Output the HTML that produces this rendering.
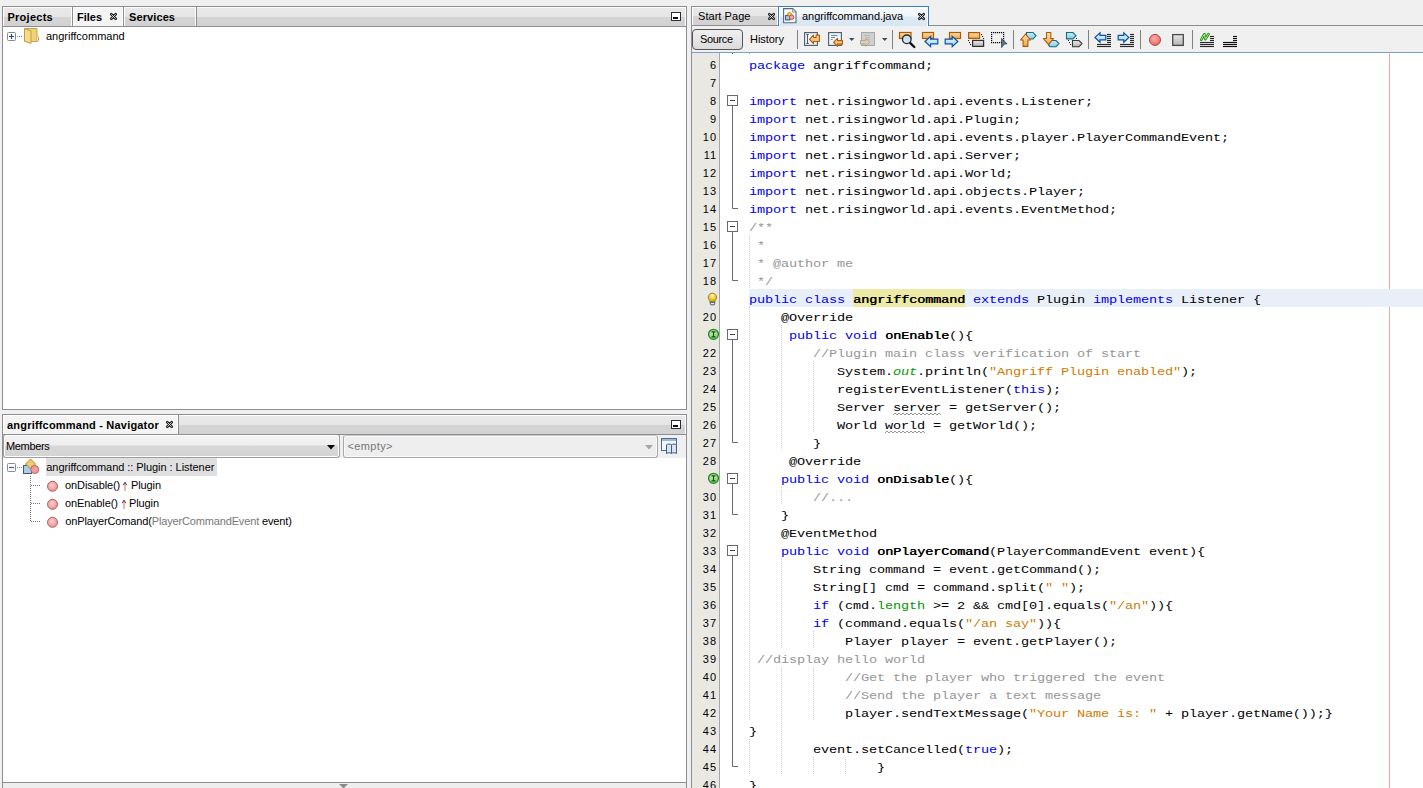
<!DOCTYPE html>
<html><head><meta charset="utf-8">
<style>
*{box-sizing:border-box;margin:0;padding:0}
html,body{width:1423px;height:788px;overflow:hidden;background:#f0f0f0;font-family:"Liberation Sans",sans-serif;font-size:11px;color:#000}
.a{position:absolute}
.bd{border:1px solid #8c8e93}
.tabg{background:linear-gradient(#e9e9e9 0,#e6e6e6 50%,#d4d4d4 52%,#d2d2d2 100%)}
.tt{position:absolute;font-weight:bold;font-size:11px;line-height:13px;white-space:pre}
.code{position:absolute;left:749px;font-family:"Liberation Mono",monospace;font-size:11.8px;letter-spacing:-0.1245px;line-height:18px;white-space:pre;color:#000;transform:scaleX(1.15);transform-origin:0 0}
.ln{position:absolute;left:692px;width:25.1px;text-align:right;font-size:11px;line-height:18px;letter-spacing:1px;color:#000}
.k{color:#0000e6}
.c{color:#969696}
.s{color:#ce7b00}
.f{color:#009900}
.b{font-weight:normal;text-shadow:0.5px 0 0 #000}
.w{}
</style></head><body>
<!-- ============ Projects panel ============ -->
<div class="a bd" style="left:2px;top:6px;width:685px;height:404px;background:#fff"></div>
<div class="a tabg" style="left:3px;top:7px;width:683px;height:20px;border-bottom:1px solid #8c8e93;box-shadow:inset 1px 1px 0 #fff,inset -1px 0 0 #fff"></div>
<div class="a tabg" style="left:3px;top:7px;width:70px;height:20px;border-bottom:1px solid #8c8e93;border-right:1px solid #8c8e93;box-shadow:inset 1px 1px 0 #fff,inset -1px 0 0 #fff"></div>
<div class="a" style="left:73px;top:7px;width:51px;height:20px;background:#f4f4f4;border-bottom:1px solid #8c8e93;border-right:1px solid #8c8e93;box-shadow:inset 1px 1px 0 #fff,inset -1px 0 0 #fff"></div>
<div class="a tabg" style="left:124px;top:7px;width:73px;height:20px;border-bottom:1px solid #8c8e93;border-right:1px solid #8c8e93;box-shadow:inset 1px 1px 0 #fff,inset -1px 0 0 #fff"></div>
<div class="tt" style="left:7.5px;top:11px;letter-spacing:0.25px">Projects</div>
<div class="tt" style="left:77px;top:11px">Files</div>
<div class="tt" style="left:129px;top:11px;letter-spacing:0.1px">Services</div>
<svg class="a" width="9" height="9" viewBox="0 0 9 9" style="left:109px;top:12px"><path d="M2.3 2.3L6.7 6.7M6.7 2.3L2.3 6.7" stroke="#262626" stroke-width="2.7" stroke-linecap="round"/><path d="M2.3 2.3L6.7 6.7M6.7 2.3L2.3 6.7" stroke="#f2f2f2" stroke-width="0.8"/></svg>
<div class="a" style="left:671px;top:12px;width:10px;height:9px;border:1px solid #2e2e33;background:#fff"></div><div class="a" style="left:673px;top:17px;width:5px;height:2px;background:#111"></div>
<svg class="a" width="40" height="18" style="left:4px;top:27px" viewBox="0 0 40 18">
 <rect x="3.5" y="5.5" width="8" height="8" rx="1" fill="#fbfbfb" stroke="#8a8a8a"/>
 <path d="M5 9.5h5M7.5 7v5" stroke="#24468c" stroke-width="1.2"/>
 <path d="M13 9.5h1M15 9.5h1M17 9.5h1" stroke="#808080"/>
 <path d="M20.5 1.5h12.5v13h-12.5z" fill="#efd27c" stroke="#c8a24c"/>
 <path d="M20.5 1.5l6.5 2.5v12.5l-6.5-2.5z" fill="#f3dc8c" stroke="#c39a40"/>
 <path d="M33 8.5l1.5 1.5v3.5l-1.5 1" fill="#f5f0e0" stroke="#c8a24c"/>
</svg>
<div class="a" style="left:46px;top:30px;line-height:13px">angriffcommand</div>

<!-- ============ Navigator panel ============ -->
<div class="a bd" style="left:2px;top:414px;width:685px;height:380px;background:#fff"></div>
<div class="a tabg" style="left:3px;top:415px;width:683px;height:20px;border-bottom:1px solid #8c8e93;box-shadow:inset 1px 1px 0 #fff,inset -1px 0 0 #fff"></div>
<div class="a" style="left:3px;top:415px;width:176px;height:20px;background:#f4f4f4;border-bottom:1px solid #8c8e93;border-right:1px solid #8c8e93;box-shadow:inset 1px 1px 0 #fff,inset -1px 0 0 #fff"></div>
<div class="tt" style="left:7px;top:419px;letter-spacing:0.2px">angriffcommand - Navigator</div>
<svg class="a" width="9" height="9" viewBox="0 0 9 9" style="left:165px;top:420px"><path d="M2.3 2.3L6.7 6.7M6.7 2.3L2.3 6.7" stroke="#262626" stroke-width="2.7" stroke-linecap="round"/><path d="M2.3 2.3L6.7 6.7M6.7 2.3L2.3 6.7" stroke="#f2f2f2" stroke-width="0.8"/></svg>
<div class="a" style="left:671px;top:420px;width:10px;height:9px;border:1px solid #2e2e33;background:#fff"></div><div class="a" style="left:673px;top:425px;width:5px;height:2px;background:#111"></div>
<div class="a" style="left:3px;top:435px;width:683px;height:23px;background:#f0f0f0"></div>
<div class="a" style="left:3px;top:434px;width:337px;height:24px;border:1px solid #9c9c9c;border-top-color:#8c8e93;border-radius:3px;box-shadow:inset 0 0 0 1px #fff;background:linear-gradient(#f3f3f3 0,#eeeeee 45%,#d8d8d8 50%,#d3d3d3 100%)"></div>
<div class="a" style="left:6px;top:440px;line-height:13px;letter-spacing:-0.35px">Members</div>
<svg class="a" width="8" height="5" style="left:327px;top:445px"><path d="M0 0h8l-4 4.5z" fill="#000"/></svg>
<div class="a" style="left:343px;top:435px;width:315px;height:23px;border:1px solid #a8a8a8;border-top-color:#c8c8c8;border-radius:3px;box-shadow:inset 0 0 0 1px #fafafa;background:#eeeeee"></div>
<div class="a" style="left:347.5px;top:440px;line-height:13px;color:#777;letter-spacing:0.35px">&lt;empty&gt;</div>
<svg class="a" width="8" height="5" style="left:645px;top:445px"><path d="M0 0h8l-4 4.5z" fill="#a8a8a8"/></svg>
<svg class="a" width="18" height="18" style="left:660px;top:437px" viewBox="0 0 18 18">
 <rect x="1.5" y="1.5" width="15" height="12" fill="#f4f7fb" stroke="#4a6a8e"/>
 <rect x="2" y="2" width="14" height="2" fill="#9bb8d8"/>
 <path d="M6.5 7.8c1.5-1 3.5-1 5 0c1.5-1 3.5-1 5 0v8.7c-1.5-1-3.5-1-5 0c-1.5-1-3.5-1-5 0z" fill="#d6e4f2" stroke="#3e5f84"/>
 <path d="M11.5 7.8v8.7" stroke="#3e5f84"/>
</svg>

<div class="a" style="left:46px;top:458px;width:171px;height:18px;background:#e0e0e0"></div>
<svg class="a" width="60" height="76" style="left:4px;top:456px" viewBox="0 0 60 76">
 <rect x="3.5" y="7.5" width="8" height="8" rx="1" fill="#fbfbfb" stroke="#8a8a8a"/>
 <path d="M5 11.5h5" stroke="#3c5cc0" stroke-width="1.2"/>
 <path d="M13 11.5h1M15 11.5h1M17 11.5h1" stroke="#808080"/>
 <rect x="19.5" y="9.5" width="8" height="8" fill="#a9cdee" stroke="#3e5870"/>
 <path d="M26.5 3l5 5l-5 5l-5-5z" fill="#eccb72" stroke="#b88a2a"/>
 <circle cx="30.7" cy="13.5" r="4" fill="#f39c9c" stroke="#b46262"/>
 <path d="M26.5 20v45M27 29.5h10M27 47.5h10M27 65.5h10" stroke="#777" stroke-dasharray="1 1"/>
 <defs><radialGradient id="rg" cx="0.45" cy="0.4" r="0.6"><stop offset="0" stop-color="#fbd0d0"/><stop offset="1" stop-color="#ee8e8e"/></radialGradient></defs><circle cx="48.5" cy="30.3" r="5" fill="url(#rg)" stroke="#b25c5c"/>
 <circle cx="48.5" cy="48.3" r="5" fill="url(#rg)" stroke="#b25c5c"/>
 <circle cx="48.5" cy="66.3" r="5" fill="url(#rg)" stroke="#b25c5c"/>
</svg>
<div class="a" style="left:46.3px;top:461px;line-height:13px;letter-spacing:-0.05px">angriffcommand :: Plugin : Listener</div>
<div class="a" style="left:65px;top:479px;line-height:13px;letter-spacing:-0.1px">onDisable()</div><svg class="a" width="6" height="11" style="left:122px;top:481px" viewBox="0 0 6 11"><path d="M3 2.5V10" stroke="#d87878" stroke-width="1.1"/><path d="M1.2 4.2L3 1.2L4.8 4.2" fill="none" stroke="#5a2a2a" stroke-width="1"/></svg><div class="a" style="left:131px;top:479px;line-height:13px;letter-spacing:-0.1px">Plugin</div>
<div class="a" style="left:65px;top:497px;line-height:13px;letter-spacing:-0.1px">onEnable()</div><svg class="a" width="6" height="11" style="left:121px;top:499px" viewBox="0 0 6 11"><path d="M3 2.5V10" stroke="#d87878" stroke-width="1.1"/><path d="M1.2 4.2L3 1.2L4.8 4.2" fill="none" stroke="#5a2a2a" stroke-width="1"/></svg><div class="a" style="left:129px;top:497px;line-height:13px;letter-spacing:-0.1px">Plugin</div>
<div class="a" style="left:65.3px;top:515px;line-height:13px;letter-spacing:-0.15px">onPlayerComand(<span style="color:#777">PlayerCommandEvent</span> event)</div>
<div class="a" style="left:3px;top:782px;width:683px;height:6px;background:#eeeeee;border-top:1px solid #8c8e93"></div>
<svg class="a" width="10" height="5" style="left:339px;top:784px"><path d="M0 0h9l-4.5 4.5z" fill="#8a8a8a"/></svg>

<!-- ============ Editor ============ -->
<div class="a" style="left:691px;top:25px;width:732px;height:763px;background:#f0f0f0;border-left:1px solid #8c8e93;border-top:1px solid #8c8e93"></div>
<div class="a tabg" style="left:691px;top:6px;width:88px;height:20px;border:1px solid #8c8e93;box-shadow:inset 1px 1px 0 #fff,inset -1px 0 0 #fff"></div>
<div class="a" style="left:778px;top:6px;width:151px;height:20px;border:1px solid #3a7bbd;border-bottom:none;background:linear-gradient(#f7fbfe 0,#eff6fb 48%,#dde9f5 52%,#d8e7f4 100%);box-shadow:inset 1px 1px 0 #fff,inset -1px 0 0 #fff"></div>
<div class="a" style="left:698px;top:10px;line-height:13px;letter-spacing:0.05px">Start Page</div>
<div class="a" style="left:802px;top:10px;line-height:13px;letter-spacing:-0.05px">angriffcommand.java</div>
<svg class="a" width="9" height="9" viewBox="0 0 9 9" style="left:767px;top:12px"><path d="M2.3 2.3L6.7 6.7M6.7 2.3L2.3 6.7" stroke="#262626" stroke-width="2.7" stroke-linecap="round"/><path d="M2.3 2.3L6.7 6.7M6.7 2.3L2.3 6.7" stroke="#f2f2f2" stroke-width="0.8"/></svg>
<svg class="a" width="9" height="9" viewBox="0 0 9 9" style="left:917px;top:12px"><path d="M2.3 2.3L6.7 6.7M6.7 2.3L2.3 6.7" stroke="#262626" stroke-width="2.7" stroke-linecap="round"/><path d="M2.3 2.3L6.7 6.7M6.7 2.3L2.3 6.7" stroke="#f2f2f2" stroke-width="0.8"/></svg>
<svg class="a" width="16" height="17" style="left:782px;top:7px" viewBox="0 0 16 17">
 <path d="M1.6 1.6h9.2l3.2 3.2v11h-12.4z" fill="#f8fafc" stroke="#5c6875" stroke-width="1.1"/>
 <path d="M10.6 1.8v3.2h3.2" fill="#e4e8ee" stroke="#7d8894" stroke-width="0.9"/>
 <rect x="3.6" y="8.6" width="4.2" height="4.3" fill="#a8d4f0" stroke="#34506c" stroke-width="1"/>
 <path d="M7.5 4.9l2.4 2.4l-2.4 2.4l-2.4-2.4z" fill="#f2c44a" stroke="#c0840c" stroke-width="0.9"/>
 <circle cx="9.6" cy="10.3" r="2.3" fill="#f7a4a0" stroke="#b04848" stroke-width="0.9"/>
</svg>
<div class="a" style="left:692px;top:29px;width:51px;height:21px;border:1px solid #555;border-radius:4px;background:linear-gradient(#efefef,#e6e6e6 50%,#dcdcdc)"></div>
<div class="a" style="left:700px;top:33px;line-height:13px;letter-spacing:-0.35px">Source</div>
<div class="a" style="left:750px;top:33px;line-height:13px;letter-spacing:-0.05px">History</div>
<svg class="a" width="1423" height="52" style="left:0;top:0">
 <defs>
  <linearGradient id="og" x1="0" y1="0" x2="0" y2="1"><stop offset="0" stop-color="#fde0b0"/><stop offset="1" stop-color="#f0a850"/></linearGradient>
  <linearGradient id="bg" x1="0" y1="0" x2="0" y2="1"><stop offset="0" stop-color="#e6f4fc"/><stop offset="1" stop-color="#a8d4f0"/></linearGradient>
  <linearGradient id="tg" x1="0" y1="0" x2="0" y2="1"><stop offset="0" stop-color="#c6eef8"/><stop offset="1" stop-color="#88cce4"/></linearGradient>
  <linearGradient id="gg" x1="0" y1="0" x2="0" y2="1"><stop offset="0" stop-color="#e8e8e8"/><stop offset="1" stop-color="#b4b4b4"/></linearGradient>
  <radialGradient id="rr" cx="0.45" cy="0.35" r="0.65"><stop offset="0" stop-color="#ffb0a8"/><stop offset="1" stop-color="#f06a66"/></radialGradient>
 </defs>
 <path d="M797.5 30v19" stroke="#7f7f7f"/><path d="M892.5 30v19" stroke="#7f7f7f"/><path d="M1013.5 30v19" stroke="#7f7f7f"/><path d="M1088.5 30v19" stroke="#7f7f7f"/><path d="M1140.5 30v19" stroke="#7f7f7f"/><path d="M1192.5 30v19" stroke="#7f7f7f"/>
 <!-- last edit -->
 <rect x="804.6" y="32.6" width="12.8" height="12.8" fill="#eef4fb" stroke="#4b5a6c" stroke-width="1.1"/>
 <path d="M806.3 34.5h2.5M807.5 34.5v9M806.3 43.5h2.5" stroke="#4b5a6c" stroke-width="1"/>
 <path d="M809.5 39.4l4-4.2v2.3h2.6v-2.4h3.3v6.4h-5.9v2.2z" fill="url(#og)" stroke="#b45c00" stroke-width="1.1" stroke-linejoin="round"/>
 <!-- prev edit -->
 <rect x="828.6" y="32.6" width="12.8" height="12.8" fill="#eef4fb" stroke="#4b5a6c" stroke-width="1.1"/>
 <path d="M831 35.5h6.5M831 37.5h4M831 39.5h1.5" stroke="#6a7a8c" stroke-width="0.9"/>
 <path d="M833.5 42.3l4-4v2.3h5v3.5h-5v2.3z" fill="url(#og)" stroke="#b45c00" stroke-width="1.1" stroke-linejoin="round"/>
 <path d="M849 38h5.5l-2.75 3z" fill="#3c4a5a"/>
 <!-- next edit disabled -->
 <rect x="861.5" y="32.5" width="13" height="13" fill="#cfcfd0" stroke="#a8a8a8"/>
 <path d="M864 35.5h6M866 37.5h4M868 39.5h2" stroke="#b8b8b8" stroke-width="0.9"/>
 <path d="M869.8 42.2l-4-4v2.3h-5.3v3.5h5.3v2.3z" fill="#dcd0b8" stroke="#b0a48c" stroke-width="1" stroke-linejoin="round"/>
 <path d="M882 38h5.5l-2.75 3z" fill="#3c4a5a"/>
 <!-- find -->
 <rect x="899.5" y="32.5" width="11.5" height="6" fill="url(#og)" stroke="#b05a00" stroke-width="1.2"/>
 <path d="M910.3 43.2l4 3.8" stroke="#111" stroke-width="2.4" stroke-linecap="round"/>
 <circle cx="906.8" cy="39.3" r="4.3" fill="#d0e4f4" fill-opacity="0.9" stroke="#1e2a36" stroke-width="1.3"/>
 <!-- prev occurrence -->
 <rect x="922.5" y="32.5" width="11" height="6" fill="url(#og)" stroke="#b05a00" stroke-width="1.2"/>
 <path d="M925 41.5l5.6-5.2v2.9h7.2v4.6h-7.2v2.9z" fill="url(#bg)" stroke="#0a52a4" stroke-width="1.2" stroke-linejoin="miter"/>
 <!-- next occurrence -->
 <rect x="949.5" y="32.5" width="11" height="6" fill="url(#og)" stroke="#b05a00" stroke-width="1.2"/>
 <path d="M957.8 41.5l-5.6-5.2v2.9h-7v4.6h7v2.9z" fill="url(#bg)" stroke="#0a52a4" stroke-width="1.2" stroke-linejoin="miter"/>
 <!-- toggle highlight -->
 <rect x="968.6" y="32.6" width="11" height="5.8" fill="url(#og)" stroke="#b05a00" stroke-width="1.2"/>
 <rect x="972.6" y="40.4" width="11" height="6" fill="url(#gg)" stroke="#303030" stroke-width="1.2"/>
 <rect x="981" y="34" width="1.1" height="1.1" fill="#222"/><rect x="982" y="36" width="1.1" height="1.1" fill="#222"/><rect x="983" y="38" width="1.1" height="1.1" fill="#222"/><rect x="968" y="40" width="1.1" height="1.1" fill="#222"/><rect x="969" y="42" width="1.1" height="1.1" fill="#222"/><rect x="970" y="44" width="1.1" height="1.1" fill="#222"/>
 <!-- rect select -->
 <rect x="991" y="32" width="1.2" height="1.2" fill="#000"/><rect x="991" y="42" width="1.2" height="1.2" fill="#000"/><rect x="993" y="32" width="1.2" height="1.2" fill="#000"/><rect x="993" y="42" width="1.2" height="1.2" fill="#000"/><rect x="995" y="32" width="1.2" height="1.2" fill="#000"/><rect x="995" y="42" width="1.2" height="1.2" fill="#000"/><rect x="997" y="32" width="1.2" height="1.2" fill="#000"/><rect x="997" y="42" width="1.2" height="1.2" fill="#000"/><rect x="999" y="32" width="1.2" height="1.2" fill="#000"/><rect x="999" y="42" width="1.2" height="1.2" fill="#000"/><rect x="1001" y="32" width="1.2" height="1.2" fill="#000"/><rect x="1001" y="42" width="1.2" height="1.2" fill="#000"/><rect x="1003" y="32" width="1.2" height="1.2" fill="#000"/><rect x="1003" y="42" width="1.2" height="1.2" fill="#000"/><rect x="991" y="34" width="1.2" height="1.2" fill="#000"/><rect x="1003" y="34" width="1.2" height="1.2" fill="#000"/><rect x="991" y="36" width="1.2" height="1.2" fill="#000"/><rect x="1003" y="36" width="1.2" height="1.2" fill="#000"/><rect x="991" y="38" width="1.2" height="1.2" fill="#000"/><rect x="1003" y="38" width="1.2" height="1.2" fill="#000"/><rect x="991" y="40" width="1.2" height="1.2" fill="#000"/><rect x="1003" y="40" width="1.2" height="1.2" fill="#000"/>
 <path d="M1001.5 38.3L1007 43.8L1004.2 44.2L1001.6 47.6Z" fill="#5d738a" stroke="#2a3746" stroke-width="0.7" stroke-linejoin="round"/>
 <!-- prev bookmark -->
 <path d="M1026.5 32.5h6.5l3 3.3l-3 3.2h-6.5z" fill="url(#tg)" stroke="#1b6c80" stroke-width="1.1"/>
 <path d="M1025.5 34l5 6h-2.6v6.4h-4.8v-6.4h-2.6z" fill="url(#og)" stroke="#b05a00" stroke-width="1.1" stroke-linejoin="round"/>
 <!-- next bookmark -->
 <path d="M1050 40.5h6l3 3.1l-3 3.1h-6l-1.5-1.5z" fill="url(#tg)" stroke="#1b6c80" stroke-width="1.1"/>
 <path d="M1046.5 32.5h4.3v6h2.8l-5.1 6.2l-5.1-6.2h3.1z" fill="url(#og)" stroke="#b05a00" stroke-width="1.1" stroke-linejoin="round"/>
 <!-- toggle bookmark -->
 <path d="M1066.5 32.5h6.5l3 3.2l-3 3.2h-6.5z" fill="url(#tg)" stroke="#1b6c80" stroke-width="1.1"/>
 <path d="M1072.5 40.5h6.5l3 3.1l-3 3.1h-6.5z" fill="url(#gg)" stroke="#3a3a3a" stroke-width="1.1"/>
 <rect x="1068" y="40" width="1" height="1" fill="#222"/><rect x="1069" y="42" width="1" height="1" fill="#222"/><rect x="1070" y="44" width="1" height="1" fill="#222"/><rect x="1076" y="38" width="1" height="1" fill="#222"/>
 <!-- shift left -->
 <path d="M1095 37.4l5-4.5v2.5h5.8v4.4h-5.8v2.5z" fill="url(#bg)" stroke="#0a52a4" stroke-width="1.2"/>
 <path d="M1107 34.5H1111" stroke="#2a2a2a" stroke-width="1.15"/><path d="M1107 36.5H1111" stroke="#2a2a2a" stroke-width="1.15"/><path d="M1107 38.5H1111" stroke="#2a2a2a" stroke-width="1.15"/><path d="M1107 40.5H1111" stroke="#2a2a2a" stroke-width="1.15"/><path d="M1107 42.5H1111" stroke="#2a2a2a" stroke-width="1.15"/>
 <path d="M1097 44.5H1111" stroke="#2a2a2a" stroke-width="1.15"/><path d="M1097 46.5H1111" stroke="#2a2a2a" stroke-width="1.15"/>
 <!-- shift right -->
 <path d="M1128.8 37.4l-5-4.5v2.5h-5.6v4.4h5.6v2.5z" fill="url(#bg)" stroke="#0a52a4" stroke-width="1.2"/>
 <path d="M1130 34.5H1134" stroke="#2a2a2a" stroke-width="1.15"/><path d="M1130 36.5H1134" stroke="#2a2a2a" stroke-width="1.15"/><path d="M1130 38.5H1134" stroke="#2a2a2a" stroke-width="1.15"/><path d="M1130 40.5H1134" stroke="#2a2a2a" stroke-width="1.15"/><path d="M1130 42.5H1134" stroke="#2a2a2a" stroke-width="1.15"/>
 <path d="M1120 44.5H1134" stroke="#2a2a2a" stroke-width="1.15"/><path d="M1120 46.5H1134" stroke="#2a2a2a" stroke-width="1.15"/>
 <!-- record -->
 <circle cx="1155" cy="39.9" r="5.5" fill="url(#rr)" stroke="#a04444" stroke-width="1"/>
 <!-- stop -->
 <rect x="1172.7" y="34.6" width="10.6" height="10.8" fill="url(#gg)" stroke="#4a4a4a" stroke-width="1.3"/>
 <!-- comment -->
 <path d="M1201.2 39.8l3.2-5.6l1 5l3.2-5.2" fill="none" stroke="#168a0c" stroke-width="2.5" stroke-linecap="round" stroke-linejoin="round"/>
 <path d="M1201.2 39.8l3.2-5.6l1 5l3.2-5.2" fill="none" stroke="#c8f8a0" stroke-width="0.9" stroke-linecap="round" stroke-linejoin="round"/>
 <path d="M1210 36.5H1214" stroke="#2a2a2a" stroke-width="1.15"/><path d="M1210 38.5H1214" stroke="#2a2a2a" stroke-width="1.15"/><path d="M1210 40.5H1214" stroke="#2a2a2a" stroke-width="1.15"/>
 <path d="M1200 42.5H1214" stroke="#2a2a2a" stroke-width="1.15"/><path d="M1200 44.5H1214" stroke="#2a2a2a" stroke-width="1.15"/><path d="M1200 46.5H1214" stroke="#2a2a2a" stroke-width="1.15"/>
 <!-- uncomment -->
 <path d="M1233 36.5H1237" stroke="#111" stroke-width="1.15"/><path d="M1233 38.5H1237" stroke="#111" stroke-width="1.15"/><path d="M1233 40.5H1237" stroke="#111" stroke-width="1.15"/>
 <path d="M1223 42.5H1237" stroke="#111" stroke-width="1.15"/><path d="M1223 44.5H1237" stroke="#111" stroke-width="1.15"/><path d="M1223 46.5H1237" stroke="#111" stroke-width="1.15"/>
</svg>
<div class="a" style="left:692px;top:52px;width:731px;height:1px;background:#7d9fc9"></div>
<div class="a" style="left:692px;top:53px;width:731px;height:735px;background:#fff"></div>
<div class="a" style="left:692px;top:53px;width:28px;height:735px;background:#e9e8e2;border-right:1px solid #a5a5a5"></div>
<div class="a" style="left:1389px;top:53px;width:1px;height:735px;background:#f4a3a3"></div>
<div class="a" style="left:749px;top:289px;width:674px;height:18px;background:#e9eff8"></div>
<div class="a" style="left:853px;top:289px;width:112px;height:18px;background:#eceaa5"></div>
<!--GUT-->
<svg class="a" width="731" height="735" style="left:692px;top:53px" viewBox="692 53 731 735">
<defs><radialGradient id="bulb" cx="0.5" cy="0.3" r="0.7"><stop offset="0" stop-color="#fffce8"/><stop offset="0.35" stop-color="#f4dc60"/><stop offset="1" stop-color="#c89410"/></radialGradient><radialGradient id="grn" cx="0.45" cy="0.4" r="0.6"><stop offset="0" stop-color="#d8f0c8"/><stop offset="1" stop-color="#78c060"/></radialGradient></defs>
<path d="M749.5 235V289" stroke="#cfcfcf" stroke-dasharray="1 1"/>
<path d="M749.5 307V721" stroke="#cfcfcf" stroke-dasharray="1 1"/>
<path d="M749.5 739V775" stroke="#cfcfcf" stroke-dasharray="1 1"/>
<path d="M781.5 325V451" stroke="#cfcfcf" stroke-dasharray="1 1"/>
<path d="M781.5 487V505" stroke="#cfcfcf" stroke-dasharray="1 1"/>
<path d="M781.5 559V649" stroke="#cfcfcf" stroke-dasharray="1 1"/>
<path d="M781.5 667V775" stroke="#cfcfcf" stroke-dasharray="1 1"/>
<path d="M813.5 361V433" stroke="#cfcfcf" stroke-dasharray="1 1"/>
<path d="M813.5 631V649" stroke="#cfcfcf" stroke-dasharray="1 1"/>
<path d="M813.5 667V721" stroke="#cfcfcf" stroke-dasharray="1 1"/>
<path d="M813.5 757V775" stroke="#cfcfcf" stroke-dasharray="1 1"/>
<path d="M845.5 757V775" stroke="#cfcfcf" stroke-dasharray="1 1"/>
<path d="M732.5 105V208.5H738" fill="none" stroke="#6a6a6a"/>
<rect x="727.5" y="95.5" width="10" height="10" fill="#fff" stroke="#6a6a6a"/>
<path d="M730 100.5h5" stroke="#444"/>
<path d="M732.5 231V280.5H738" fill="none" stroke="#6a6a6a"/>
<rect x="727.5" y="221.5" width="10" height="10" fill="#fff" stroke="#6a6a6a"/>
<path d="M730 226.5h5" stroke="#444"/>
<path d="M732.5 339V442.5H738" fill="none" stroke="#6a6a6a"/>
<rect x="727.5" y="329.5" width="10" height="10" fill="#fff" stroke="#6a6a6a"/>
<path d="M730 334.5h5" stroke="#444"/>
<path d="M732.5 483V514.5H738" fill="none" stroke="#6a6a6a"/>
<rect x="727.5" y="473.5" width="10" height="10" fill="#fff" stroke="#6a6a6a"/>
<path d="M730 478.5h5" stroke="#444"/>
<path d="M732.5 555V766.5H738" fill="none" stroke="#6a6a6a"/>
<rect x="727.5" y="545.5" width="10" height="10" fill="#fff" stroke="#6a6a6a"/>
<path d="M730 550.5h5" stroke="#444"/>
<path d="M712.4 293.2c2.4 0 4.2 1.8 4.2 4.1c0 1.7-1.1 2.6-1.6 3.5v1.3h-5.2v-1.3c-0.5-0.9-1.6-1.8-1.6-3.5c0-2.3 1.8-4.1 4.2-4.1z" fill="url(#bulb)" stroke="#a87a08" stroke-width="0.9"/>
<path d="M710.3 302.3h4.4v1.6c0 0.5-0.4 0.9-0.9 0.9h-2.6c-0.5 0-0.9-0.4-0.9-0.9z" fill="#e8ecf2" stroke="#33455c" stroke-width="0.9"/>
<circle cx="713.5" cy="334.3" r="5" fill="url(#grn)" stroke="#1f8a1f" stroke-width="1.2"/>
<path d="M711.5 331.8h4M713.5 331.8v5M711.5 336.8h4" stroke="#0c5a0c" stroke-width="1.3"/>
<circle cx="713.5" cy="478.3" r="5" fill="url(#grn)" stroke="#1f8a1f" stroke-width="1.2"/>
<path d="M711.5 475.8h4M713.5 475.8v5M711.5 480.8h4" stroke="#0c5a0c" stroke-width="1.3"/>
<rect x="732" y="53" width="1" height="1" fill="#555"/><rect x="749" y="53" width="1" height="1" fill="#aaa"/>
<path d="M893 415L895 413L897 415L899 413L901 415L903 413L905 415L907 413L909 415L911 413L913 415L915 413L917 415L919 413L921 415L923 413L925 415L927 413L929 415L931 413L933 415L935 413L937 415L939 413L941 415" fill="none" stroke="#8a8a8a" stroke-width="0.9"/>
<path d="M885 433L887 431L889 433L891 431L893 433L895 431L897 433L899 431L901 433L903 431L905 433L907 431L909 433L911 431L913 433L915 431L917 433L919 431L921 433L923 431L925 433" fill="none" stroke="#8a8a8a" stroke-width="0.9"/>
</svg>
<!--/GUT-->
<!--CODE-->
<div class="ln" style="top:56px">6</div>
<div class="code" style="top:57px"><span class="k">package</span> angriffcommand;</div>
<div class="ln" style="top:74px">7</div>
<div class="code" style="top:75px"></div>
<div class="ln" style="top:92px">8</div>
<div class="code" style="top:93px"><span class="k">import</span> net.risingworld.api.events.Listener;</div>
<div class="ln" style="top:110px">9</div>
<div class="code" style="top:111px"><span class="k">import</span> net.risingworld.api.Plugin;</div>
<div class="ln" style="top:128px">10</div>
<div class="code" style="top:129px"><span class="k">import</span> net.risingworld.api.events.player.PlayerCommandEvent;</div>
<div class="ln" style="top:146px">11</div>
<div class="code" style="top:147px"><span class="k">import</span> net.risingworld.api.Server;</div>
<div class="ln" style="top:164px">12</div>
<div class="code" style="top:165px"><span class="k">import</span> net.risingworld.api.World;</div>
<div class="ln" style="top:182px">13</div>
<div class="code" style="top:183px"><span class="k">import</span> net.risingworld.api.objects.Player;</div>
<div class="ln" style="top:200px">14</div>
<div class="code" style="top:201px"><span class="k">import</span> net.risingworld.api.events.EventMethod;</div>
<div class="ln" style="top:218px">15</div>
<div class="code" style="top:219px"><span class="c">/**</span></div>
<div class="ln" style="top:236px">16</div>
<div class="code" style="top:237px"><span class="c"> *</span></div>
<div class="ln" style="top:254px">17</div>
<div class="code" style="top:255px"><span class="c"> * @author me</span></div>
<div class="ln" style="top:272px">18</div>
<div class="code" style="top:273px"><span class="c"> */</span></div>
<div class="code" style="top:291px"><span class="k">public</span> <span class="k">class</span> <span class="b">angriffcommand</span> <span class="k">extends</span> Plugin <span class="k">implements</span> Listener {</div>
<div class="ln" style="top:308px">20</div>
<div class="code" style="top:309px">    @Override</div>
<div class="code" style="top:327px">     <span class="k">public</span> <span class="k">void</span> <span class="b">onEnable</span>(){</div>
<div class="ln" style="top:344px">22</div>
<div class="code" style="top:345px">        <span class="c">//Plugin main class verification of start</span></div>
<div class="ln" style="top:362px">23</div>
<div class="code" style="top:363px">           System.<span class="f"><i>out</i></span>.println(<span class="s">"Angriff Plugin enabled"</span>);</div>
<div class="ln" style="top:380px">24</div>
<div class="code" style="top:381px">           registerEventListener(<span class="k">this</span>);</div>
<div class="ln" style="top:398px">25</div>
<div class="code" style="top:399px">           Server <span class="w">server</span> = getServer();</div>
<div class="ln" style="top:416px">26</div>
<div class="code" style="top:417px">           World <span class="w">world</span> = getWorld();</div>
<div class="ln" style="top:434px">27</div>
<div class="code" style="top:435px">        }</div>
<div class="ln" style="top:452px">28</div>
<div class="code" style="top:453px">     @Override</div>
<div class="code" style="top:471px">    <span class="k">public</span> <span class="k">void</span> <span class="b">onDisable</span>(){</div>
<div class="ln" style="top:488px">30</div>
<div class="code" style="top:489px">        <span class="c">//...</span></div>
<div class="ln" style="top:506px">31</div>
<div class="code" style="top:507px">    }</div>
<div class="ln" style="top:524px">32</div>
<div class="code" style="top:525px">    @EventMethod</div>
<div class="ln" style="top:542px">33</div>
<div class="code" style="top:543px">    <span class="k">public</span> <span class="k">void</span> <span class="b">onPlayerComand</span>(PlayerCommandEvent event){</div>
<div class="ln" style="top:560px">34</div>
<div class="code" style="top:561px">        String command = event.getCommand();</div>
<div class="ln" style="top:578px">35</div>
<div class="code" style="top:579px">        String[] cmd = command.split(<span class="s">" "</span>);</div>
<div class="ln" style="top:596px">36</div>
<div class="code" style="top:597px">        <span class="k">if</span> (cmd.<span class="f">length</span> &gt;= 2 &amp;&amp; cmd[0].equals(<span class="s">"/an"</span>)){</div>
<div class="ln" style="top:614px">37</div>
<div class="code" style="top:615px">        <span class="k">if</span> (command.equals(<span class="s">"/an say"</span>)){</div>
<div class="ln" style="top:632px">38</div>
<div class="code" style="top:633px">            Player player = event.getPlayer();</div>
<div class="ln" style="top:650px">39</div>
<div class="code" style="top:651px"> <span class="c">//display hello world</span></div>
<div class="ln" style="top:668px">40</div>
<div class="code" style="top:669px">            <span class="c">//Get the player who triggered the event</span></div>
<div class="ln" style="top:686px">41</div>
<div class="code" style="top:687px">            <span class="c">//Send the player a text message</span></div>
<div class="ln" style="top:704px">42</div>
<div class="code" style="top:705px">            player.sendTextMessage(<span class="s">"Your Name is: "</span> + player.getName());}</div>
<div class="ln" style="top:722px">43</div>
<div class="code" style="top:723px">}</div>
<div class="ln" style="top:740px">44</div>
<div class="code" style="top:741px">        event.setCancelled(<span class="k">true</span>);</div>
<div class="ln" style="top:758px">45</div>
<div class="code" style="top:759px">                }</div>
<div class="ln" style="top:776px">46</div>
<div class="code" style="top:777px">}</div>
<!--/CODE-->
</body></html>
